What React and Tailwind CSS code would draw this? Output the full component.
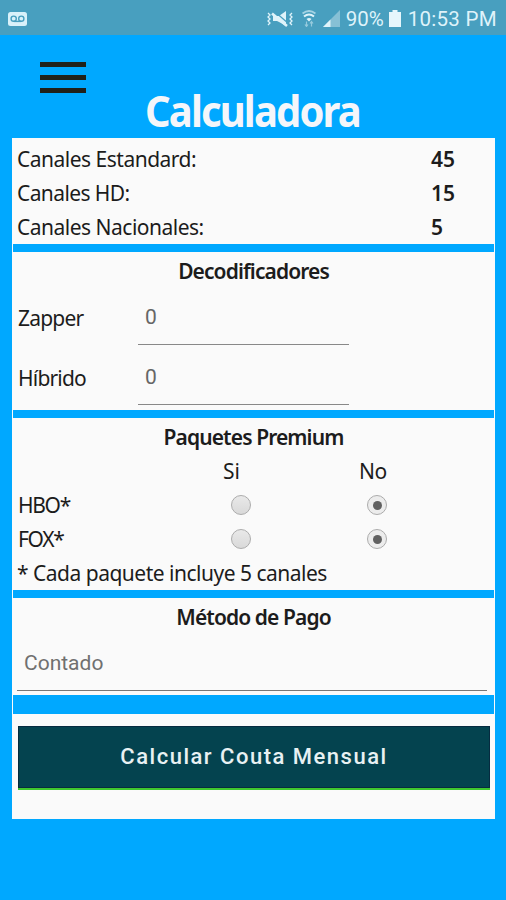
import React, { useState } from 'react';

const CHANNELS = [
    { label: 'Canales Estandard:', value: 45, tracking: 'tracking-[-0.5px]' },
    { label: 'Canales HD:', value: 15, tracking: 'tracking-[-0.6px]' },
    { label: 'Canales Nacionales:', value: 5, tracking: 'tracking-[-0.5px]' },
];

function StatusBar() {
    return (
        <div className="flex h-[34.5px] items-center bg-[#489fbf] pl-2 pr-[9px] pt-[3px] font-['Roboto',sans-serif] text-[20.5px] text-[#dff3fa]">
            <svg width="19" height="14" viewBox="0 0 19 14" fill="none">
                <rect width="19" height="14" rx="2.5" fill="#d9f1fa" />
                <g stroke="#489fbf" strokeWidth="1.4">
                    <circle cx="5.7" cy="6.7" r="2.6" />
                    <circle cx="13.3" cy="6.7" r="2.6" />
                    <path d="M5.7 9.4h7.6" />
                </g>
            </svg>
            <div className="ml-auto flex items-center">
                <svg width="26" height="18" viewBox="0 0 26 18" fill="none">
                    <path d="M6 6h6l7-5v15l-5-3-4-2H6z" fill="#dff3fa" />
                    <path d="M7 1l15 13" stroke="#489fbf" strokeWidth="1.2" />
                    <path d="M5 3.500L20 16" stroke="#dff3fa" strokeWidth="2.6" />
                    <path d="M1 3l2 2-2 2 2 2-2 2 2 2-2 2M25 3l-2 2 2 2-2 2 2 2-2 2 2 2" stroke="#dff3fa" strokeWidth="1.3" />
                </svg>
                <svg className="ml-[9px]" width="14" height="17" viewBox="0 0 14 17" fill="none">
                    <path d="M.500 3.500c4-3 9-3 13 0" stroke="#a5d3e4" strokeWidth="2" />
                    <path d="M2 6.500c3-2.500 7-2.500 10 0" stroke="#dff3fa" strokeWidth="2" />
                    <path d="M4.500 9q2.500-2 5 0L7 11.500z" fill="#dff3fa" />
                    <path d="M4.500 11.500v5M3 14.500l1.500 2 1.500-2M9.500 16.500v-5M8 13.500l1.500-2 1.500 2" stroke="#95cadd" strokeWidth="1.2" />
                </svg>
                <svg className="ml-[7px]" width="17" height="17" viewBox="0 0 17 17">
                    <path d="M0 17L17 0v17z" fill="#86c0d5" />
                    <path d="M0 17l7.500-7.500V17z" fill="#dff3fa" />
                </svg>
                <span className="ml-[6px] w-[39px] whitespace-nowrap tracking-[0px]">90%</span>
                <svg className="ml-[4px]" width="12" height="17" viewBox="0 0 12 17" fill="#e6f6fc">
                    <path d="M3.500 0h5v2H12v15H0V2h3.500z" />
                </svg>
                <span className="ml-[7px] whitespace-nowrap tracking-[0.3px]">10:53 PM</span>
            </div>
        </div>
    );
}

function SectionTitle({ children }) {
    return <h2 className="flex h-[34px] items-center justify-center text-[21px] font-semibold tracking-[-0.9px]">{children}</h2>;
}

function Divider() {
    return <div className="mx-px h-2 bg-[#00a8ff]" />;
}

function Decoder({ label, value }) {
    return (
        <div className="flex h-[60px] pl-[6px]">
            <span className="flex w-[120px] items-center tracking-[-0.8px]">{label}</span>
            <div className="flex h-[57px] w-[211px] items-center border-b border-[#888] pl-[7px] pt-[2px] font-['Roboto',sans-serif] text-[21px] text-[#666]">
                {value}
            </div>
        </div>
    );
}

function Radio({ checked, onClick }) {
    return (
        <button
            onClick={onClick}
            className={`flex size-5 items-center justify-center rounded-full border-[1.5px] border-[#acacac] ${checked ? 'bg-[#ececec]' : 'bg-gradient-to-b from-[#e9e9e9] to-[#d9d9d9]'}`}
        >
            {checked && <span className="size-[9px] rounded-full bg-[#606060]" />}
        </button>
    );
}

function PremiumRow({ label }) {
    const [selected, setSelected] = useState(false);

    return (
        <div className="flex h-[34px] items-center pl-[6px]">
            <span className="w-[213px] tracking-[-1.3px]">{label}</span>
            <Radio checked={selected} onClick={() => setSelected(true)} />
            <span className="w-[116px]" />
            <Radio checked={!selected} onClick={() => setSelected(false)} />
        </div>
    );
}

export default function App() {
    return (
        <div className="h-[900px] w-[506px] overflow-hidden bg-[#00a8ff] font-['Noto_Sans',sans-serif] text-[21px] leading-none text-[#1c1c1c]">
            <StatusBar />

            <header className="h-[103.5px] pl-10 pt-[27.5px]">
                <button className="flex w-[46px] flex-col gap-[8px]">
                    <span className="h-[5px] w-full bg-[#20201a]" />
                    <span className="h-[5px] w-full bg-[#20201a]" />
                    <span className="h-[5px] w-full bg-[#20201a]" />
                </button>
                <h1 className="ml-[105px] mt-[-4px] w-fit origin-left scale-x-[0.93] text-[43px] font-bold leading-[44px] tracking-[-2px] text-[#f4f6fa]">Calculadora</h1>
            </header>

            <main className="mx-3 mr-[11px] h-[681px] bg-[#fafafa]">
                <section className="h-[106px] pt-1">
                    {CHANNELS.map((channel) => (
                        <div key={channel.label} className="flex h-[34px] items-center pl-[5px]">
                            <span className={`w-[414px] ${channel.tracking}`}>{channel.label}</span>
                            <span className="font-semibold">{channel.value}</span>
                        </div>
                    ))}
                </section>
                <Divider />

                <section className="h-[158px] pt-[2px]">
                    <SectionTitle>Decodificadores</SectionTitle>
                    <Decoder label="Zapper" value="0" />
                    <Decoder label="Híbrido" value="0" />
                </section>
                <Divider />

                <section className="h-[172px] pt-[2px]">
                    <SectionTitle>Paquetes Premium</SectionTitle>
                    <div className="flex h-[34px] items-center pl-[211px]">
                        <span className="w-[136px]">Si</span>
                        <span className="tracking-[-0.5px]">No</span>
                    </div>
                    <PremiumRow label="HBO*" />
                    <PremiumRow label="FOX*" />
                    <p className="flex h-[34px] items-center pl-[5px] tracking-[-0.5px]">* Cada paquete incluye 5 canales</p>
                </section>
                <Divider />

                <section className="h-[97px] pt-[2px]">
                    <SectionTitle>Método de Pago</SectionTitle>
                    <div className="ml-[5px] flex h-[57px] w-[470px] items-center border-b border-[#777] pl-[7px] pt-[2px] font-['Roboto',sans-serif] text-[21px] text-[#707070]">
                        Contado
                    </div>
                </section>
                <div className="mx-px h-[19px] bg-[#00a8ff]" />

                <button className="ml-[6px] mt-3 flex h-[64px] w-[472px] items-center justify-center border-b-2 border-[#3fc72f] bg-[#04434f] font-['Roboto',sans-serif] text-[22px] font-medium tracking-[1.5px] text-[#e8f1f3] shadow-[inset_0_0_0_1px_#062b40]">
                    Calcular Couta Mensual
                </button>
            </main>
        </div>
    );
}
